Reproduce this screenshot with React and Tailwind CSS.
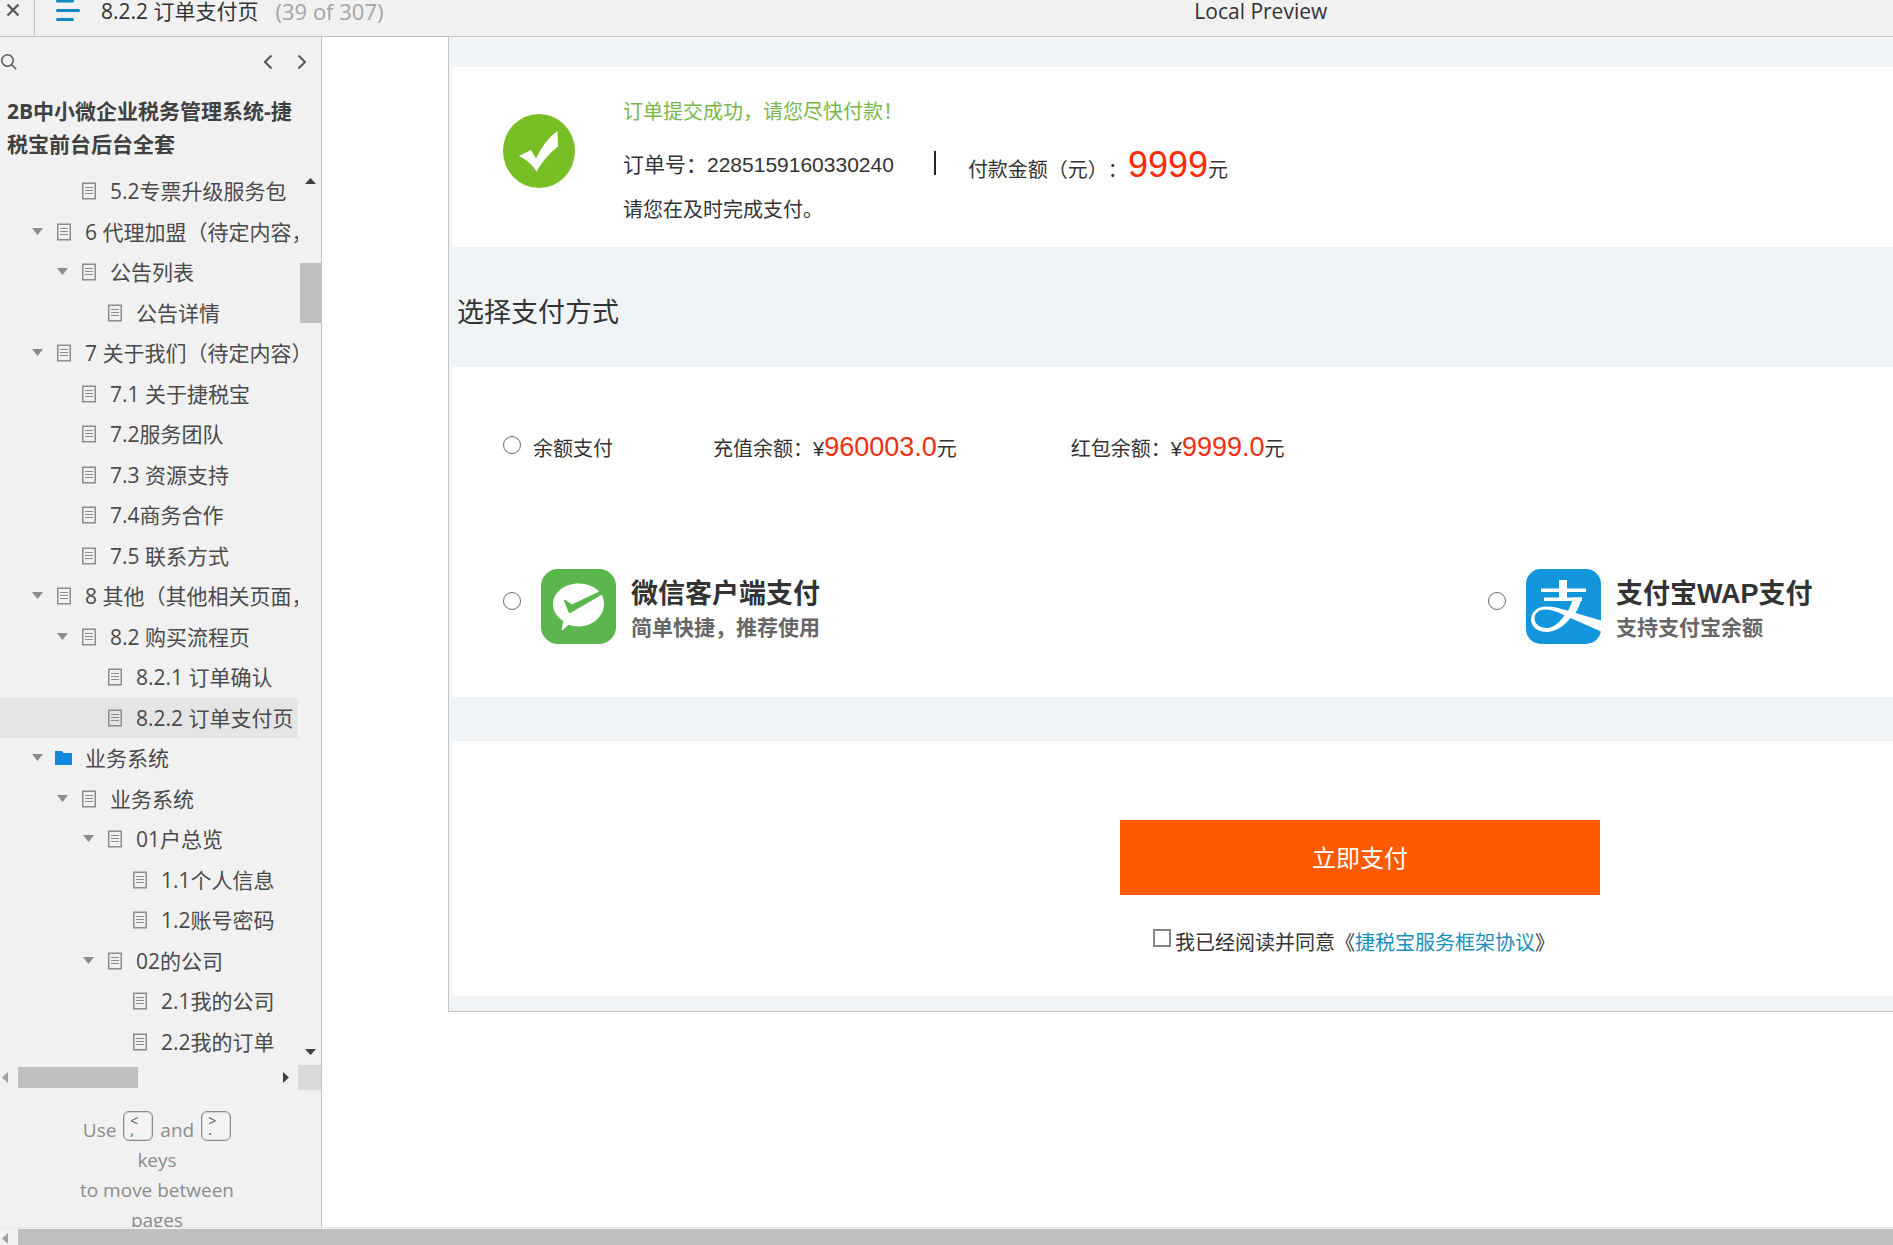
import React from "react";

const uiFont = "font-['Open_Sans','Noto_Sans_CJK_SC',sans-serif]";
const pageFont = "font-['Liberation_Sans','Noto_Sans_CJK_SC',sans-serif]";

const tree = [
  { level: 2, label: "5.2专票升级服务包" },
  { level: 1, label: "6 代理加盟（待定内容，", open: true },
  { level: 2, label: "公告列表", open: true },
  { level: 3, label: "公告详情" },
  { level: 1, label: "7 关于我们（待定内容）", open: true },
  { level: 2, label: "7.1 关于捷税宝" },
  { level: 2, label: "7.2服务团队" },
  { level: 2, label: "7.3 资源支持" },
  { level: 2, label: "7.4商务合作" },
  { level: 2, label: "7.5 联系方式" },
  { level: 1, label: "8 其他（其他相关页面，", open: true },
  { level: 2, label: "8.2 购买流程页", open: true },
  { level: 3, label: "8.2.1 订单确认" },
  { level: 3, label: "8.2.2 订单支付页", active: true },
  { level: 1, label: "业务系统", open: true, folder: true },
  { level: 2, label: "业务系统", open: true },
  { level: 3, label: "01户总览", open: true },
  { level: 4, label: "1.1个人信息" },
  { level: 4, label: "1.2账号密码" },
  { level: 3, label: "02的公司", open: true },
  { level: 4, label: "2.1我的公司" },
  { level: 4, label: "2.2我的订单" },
];

const indent = { 1: "pl-8", 2: "pl-[57px]", 3: "pl-[83px]", 4: "pl-[108px]" };

function PageIcon() {
  return (
    <svg width="14" height="18" viewBox="0 0 14 18" fill="none" stroke="#8c8c8c">
      <rect x="0.75" y="1.25" width="12.5" height="15.5" strokeWidth="1.5" />
      <path d="M3 5.5h8M3 8.5h8M3 11.5h8" strokeWidth="1.2" />
    </svg>
  );
}

function FolderIcon() {
  return (
    <svg width="17" height="16" viewBox="0 0 17 16" fill="#1088e0">
      <path d="M0 1h7l1.5 2H17v12H0z" />
    </svg>
  );
}

function Tri({ d, fill, w, h }) {
  return (
    <svg width={w} height={h} viewBox={`0 0 ${w} ${h}`} fill={fill} className="shrink-0">
      <path d={d} />
    </svg>
  );
}

function Row({ item }) {
  return (
    <li className={`flex flex-1 items-center ${indent[item.level]} ${item.active ? "bg-[#e5e5e5]" : ""}`}>
      <span className="flex w-[25px] shrink-0 items-center">
        {item.open && <Tri w={11} h={8} fill="#8c8c8c" d="M0 0h11L5.5 7z" />}
      </span>
      <a href="#page" className="flex items-center whitespace-nowrap">
        <span className={`flex shrink-0 ${item.folder ? "-ml-0.5 w-[30px]" : "w-7"}`}>
          {item.folder ? <FolderIcon /> : <PageIcon />}
        </span>
        {item.label}
      </a>
    </li>
  );
}

function Key({ top, bottom }) {
  return (
    <kbd className="flex h-[30px] w-[30px] flex-col rounded-md border border-[#8c8c8c] bg-[#f4f4f4] pl-1.5 font-['Open_Sans',sans-serif] text-sm text-[#555] shadow-[inset_0_0_0_1px_#d4d4d4]">
      <span className="h-3 leading-[18px]">{top}</span>
      <span className="h-3 leading-3">{bottom}</span>
    </kbd>
  );
}

function Sidebar() {
  return (
    <aside className="flex w-[322px] shrink-0 flex-col overflow-hidden border-r border-[#c4c4c4] bg-[#f1f1f1] text-[#4a4a4a]">
      <div className="flex h-12 shrink-0 items-center pt-px">
        <button aria-label="Search">
          <svg width="18" height="18" viewBox="0 0 18 18" fill="none" stroke="#555" strokeWidth="1.5">
            <circle cx="7.5" cy="7.5" r="5.7" />
            <path d="M11.5 11.5l4.7 4.7" />
          </svg>
        </button>
        <div className="ml-auto mr-[14px] flex gap-6">
          <button aria-label="Previous page">
            <svg width="10" height="16" viewBox="0 0 10 16" fill="none" stroke="#555" strokeWidth="2">
              <path d="M8.5 1.5L2 8l6.5 6.5" />
            </svg>
          </button>
          <button aria-label="Next page">
            <svg width="10" height="16" viewBox="0 0 10 16" fill="none" stroke="#555" strokeWidth="2">
              <path d="M1.5 1.5L8 8l-6.5 6.5" />
            </svg>
          </button>
        </div>
      </div>
      <h1 className="h-[86px] shrink-0 pl-[7px] pr-5 pt-[10px] text-[21px] leading-[33px] font-bold text-[#404040]">
        2B中小微企业税务管理系统-捷税宝前台后台全套
      </h1>
      <div className="flex shrink-0">
        <ul className="flex h-[891px] w-[298px] flex-col overflow-hidden text-[21px] leading-8">
          {tree.map((item, i) => (
            <Row key={i} item={item} />
          ))}
        </ul>
        <div className="flex flex-1 flex-col items-end pb-[7px] pt-[7px]">
          <div className="flex w-[21px] justify-center">
            <Tri w={11} h={6} fill="#404040" d="M0 6h11L5.5 0z" />
          </div>
          <div className="mt-[79px] h-[60px] w-[21px] bg-[#c0c0c0]" />
          <div className="mt-auto flex w-[21px] justify-center">
            <Tri w={11} h={6} fill="#404040" d="M0 0h11L5.5 6z" />
          </div>
        </div>
      </div>
      <div className="mt-[3px] flex h-[25px] shrink-0 items-center">
        <div className="flex w-[18px] pl-0.5">
          <Tri w={6} h={11} fill="#a0a0a0" d="M6 0v11L0 5.5z" />
        </div>
        <div className="h-[21px] w-[120px] bg-[#c0c0c0]" />
        <div className="ml-auto mr-[9px]">
          <Tri w={6} h={11} fill="#404040" d="M0 0v11l6-5.5z" />
        </div>
        <div className="h-[25px] w-[23px] bg-[#dadada]" />
      </div>
      <div className="mr-[7px] mt-[21px] flex flex-col items-center text-[19px] leading-[30px] text-[#8c8c8c]">
        <div className="flex gap-[7px]">
          <span className="pt-1">Use</span>
          <Key top="<" bottom="," />
          <span className="pt-1">and</span>
          <Key top=">" bottom="." />
        </div>
        <p className="text-center">
          keys
          <br />
          to move between
          <br />
          pages
        </p>
      </div>
    </aside>
  );
}

function CheckBadge() {
  return (
    <svg width="74" height="76" viewBox="0 0 74 76" className="shrink-0">
      <ellipse cx="37" cy="38" rx="36" ry="37" fill="#78be25" />
      <path d="M17 43l12-6 5 8.500q9-19 21.500-27.500l.5 15.500q-13 10-21.500 25-6-10-17.500-15.500z" fill="#fff" />
    </svg>
  );
}

function WechatIcon() {
  return (
    <svg width="75" height="75" viewBox="0 0 75 75" className="shrink-0">
      <rect width="75" height="75" rx="17" fill="#5ab64d" />
      <path d="M37.500 14.500c8.500 0 16 3 20.600 8L31 35.500l-6.500-4.500c-.8-.5-1.700.2-1.400 1.100l4.300 10.800c.4 1 1.500 1.300 2.400.8l31-18c1.500 3 2.200 6 2.200 9.300 0 12.500-11.500 22.500-25.500 22.500-3.500 0-6.800-.6-9.800-1.700l-6 5.200c-.6.400-1.200.1-1-.6l1.500-8.600C15.700 47.800 12 41.700 12 35c0-11.500 11.500-20.500 25.500-20.500z" fill="#fff" />
    </svg>
  );
}

function AlipayIcon() {
  return (
    <svg width="75" height="75" viewBox="0 0 75 75" className="shrink-0">
      <rect width="75" height="75" rx="15" fill="#1296db" />
      <g fill="#fff">
        <path d="M33 11h8v20h-8zM15 19.500h45v3.600H15zM18 28.500h38v3.600H18z" />
        <path d="M47 28.500h9c-1.500 5.500-4 11-6.500 15.500L75 51.500V62.500L44.500 49C38 57.500 29 63 20.500 63 11.500 63 5 57.500 5 50.500S11 37.500 20 37.500c8 0 15 2 22 4.300 2-4 4-8.500 5-13.300zM38.500 46.500C32.500 43 25 40.500 19 40.500c-6.500 0-10.500 4-10.500 9s5 9.500 12 9.500c7.500 0 13-6 18-12.500z" />
      </g>
    </svg>
  );
}

const radioCls =
  "size-[18px] shrink-0 appearance-none rounded-full border border-[#6b6b6b] bg-white checked:border-[5px] checked:border-[#1296db]";

function PayMethod({ id, title, sub, icon, className }) {
  return (
    <div className={`flex items-center ${className}`}>
      <input type="radio" name="pay" id={id} className={`mb-[10px] ${radioCls}`} />
      <label htmlFor={id} className="ml-5 flex items-center">
        {icon}
        <span className="ml-[15px] flex flex-col pt-2 font-bold">
          <span className="text-[27px] leading-9 text-[#333]">{title}</span>
          <span className="text-[21px] leading-8 text-[#666]">{sub}</span>
        </span>
      </label>
    </div>
  );
}

function Balance({ label, value, className }) {
  return (
    <p className={className}>
      {label}¥<span className="text-[27px] text-[#f03010]">{value}</span>元
    </p>
  );
}

function Content() {
  return (
    <main className={`min-w-0 flex-1 overflow-hidden bg-white pl-[126px] text-[#333] ${pageFont}`}>
      <div className="border-b border-l border-[#c4c4c4] bg-[#f0f4f7] pb-[15px] pl-[3px] pt-[30px]">
        <section className="flex h-[180px] bg-white pl-[50px] pt-[46px]">
          <CheckBadge />
          <div className="-mt-4 ml-[47px] flex flex-col whitespace-nowrap text-[20px]">
            <p className="leading-[30px] text-[#78b84a]">订单提交成功，请您尽快付款！</p>
            <div className="mt-2 flex h-[60px] items-center">
              <p className="text-[21px]">订单号：2285159160330240</p>
              <span className="ml-10 mr-8 mb-1 h-6 w-0.5 bg-[#222]" />
              <p className="[text-spacing-trim:space-all]">
                付款金额（元）：<span className="text-[36px] text-[#ff2a00]">9999</span>元
              </p>
            </div>
            <p className="leading-[30px]">请您在及时完成支付。</p>
          </div>
        </section>
        <h2 className="flex h-[120px] items-center pl-[5px] pt-3 text-[27px]">选择支付方式</h2>
        <section className="h-[330px] bg-white pl-[51px] pt-[60px]">
          <div className="flex h-10 items-center whitespace-nowrap text-[20px]">
            <input type="radio" name="pay" id="balance" className={`mb-1 ${radioCls}`} />
            <label htmlFor="balance" className="ml-3 pt-1">余额支付</label>
            <Balance className="ml-[100px]" label="充值余额：" value="960003.0" />
            <Balance className="ml-[114px]" label="红包余额：" value="9999.0" />
          </div>
          <div className="mt-[101px] flex whitespace-nowrap">
            <PayMethod
              id="wechat"
              className="w-[985px] shrink-0"
              title="微信客户端支付"
              sub="简单快捷，推荐使用"
              icon={<WechatIcon />}
            />
            <PayMethod id="alipay" className="shrink-0" title="支付宝WAP支付" sub="支持支付宝余额" icon={<AlipayIcon />} />
          </div>
        </section>
        <section className="mt-11 h-[255px] bg-white pl-[668px] pt-[79px]">
          <button className="h-[75px] w-[480px] bg-[#ff5a00] pt-0.5 text-2xl text-white">立即支付</button>
          <div className="mt-8 flex items-center pl-[33px] text-[20px] leading-8">
            <input
              type="checkbox"
              id="agree"
              className="mb-[10px] size-[18px] shrink-0 appearance-none border-2 border-[#858585] bg-white checked:bg-[#1296db]"
            />
            <label htmlFor="agree" className="ml-1 whitespace-nowrap">
              我已经阅读并同意《
              <a href="#agreement" className="text-[#1a8fba]">捷税宝服务框架协议</a>》
            </label>
          </div>
        </section>
      </div>
    </main>
  );
}

export default function App() {
  return (
    <div className={`flex h-screen flex-col overflow-hidden bg-[#f1f1f1] ${uiFont}`}>
      <header className="grid h-[37px] shrink-0 grid-cols-[19fr_auto_9fr] border-b border-[#c4c4c4] text-[21px] leading-[22px] text-[#333]">
        <div className="flex items-start">
          <button aria-label="Close" className="flex h-full w-[35px] items-start border-r border-[#c4c4c4] pl-1.5 pt-[3px]">
            <svg width="14" height="14" viewBox="0 0 14 14" stroke="#555" strokeWidth="2.2">
              <path d="M1.500 1.500l11 11M12.500 1.500l-11 11" />
            </svg>
          </button>
          <button aria-label="Toggle page list" className="ml-[21px] flex">
            <svg width="24" height="22" viewBox="0 0 24 22" stroke="#1088c4" strokeWidth="3" strokeLinecap="round">
              <path d="M1.500 1h15M1.500 10.500h21M1.500 19.500h15" />
            </svg>
          </button>
          <span className="ml-[21px]">8.2.2 订单支付页</span>
          <span className="ml-[17px] text-[22px] text-[#a5a5a5]">(39 of 307)</span>
        </div>
        <span>Local Preview</span>
        <div />
      </header>
      <div className="flex min-h-0 flex-1">
        <Sidebar />
        <Content />
      </div>
      <div className="flex h-[18px] shrink-0 items-end border-t border-[#e8e8e8]">
        <div className="flex w-[18px] shrink-0 items-center pb-px pl-0.5">
          <Tri w={6} h={11} fill="#a0a0a0" d="M6 0v11L0 5.5z" />
        </div>
        <div className="h-4 flex-1 bg-[#c0c0c0]" />
      </div>
    </div>
  );
}
